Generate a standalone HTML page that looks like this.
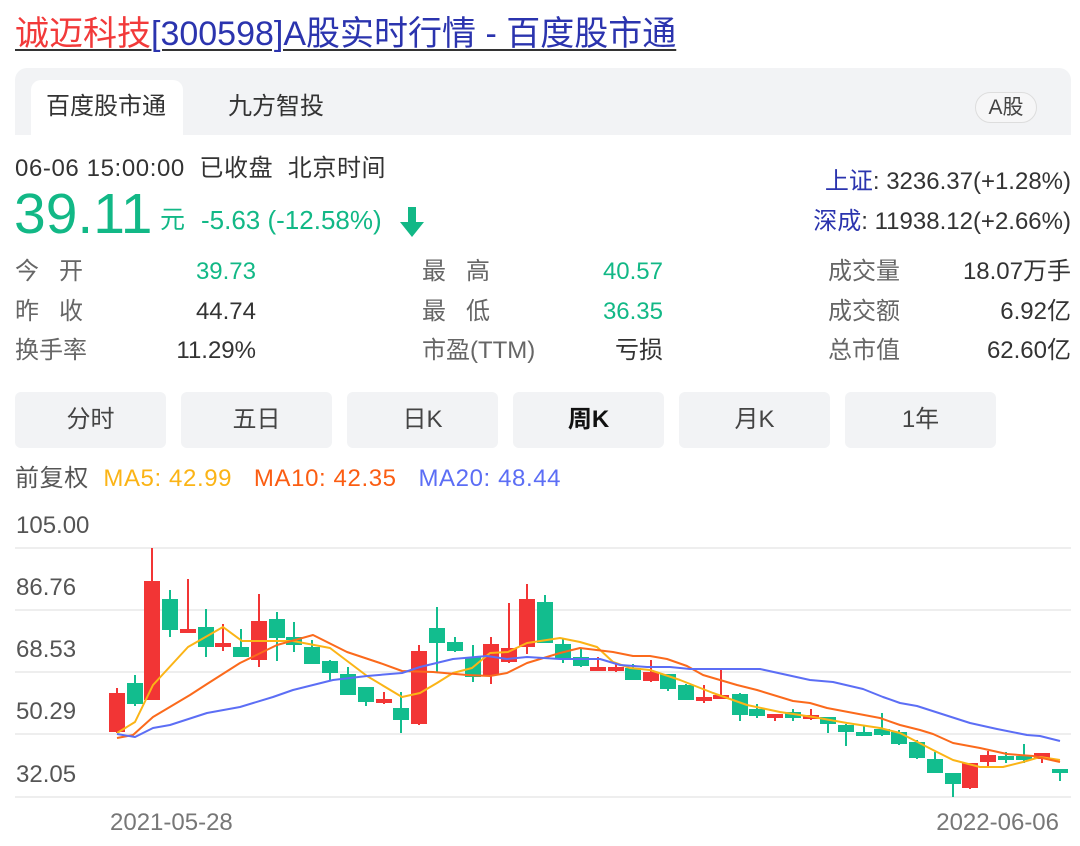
<!DOCTYPE html>
<html><head><meta charset="utf-8"><style>
*{margin:0;padding:0;box-sizing:border-box}
body{width:1080px;height:846px;background:#fff;font-family:"Liberation Sans","Noto Sans CJK SC",sans-serif;position:relative;overflow:hidden;color:#333}
.a{position:absolute;white-space:nowrap;line-height:1.15}
.t{font-size:34px;top:15px;left:15px;text-decoration:underline;text-decoration-thickness:2px;text-underline-offset:4px}
.bar{position:absolute;left:15px;top:68px;width:1056px;height:67px;background:#f2f3f5;border-radius:12px 12px 0 0}
.tab{position:absolute;left:31px;top:80px;width:152px;height:55px;background:#fff;border-radius:10px 10px 0 0}
.f22{font-size:24px}
.lb{color:#666}
.g{color:#12b886}
.btn{position:absolute;top:392px;width:151px;height:56px;background:#f2f3f5;border-radius:6px;font-size:24px;color:#444;text-align:center;line-height:56px}
.yl{font-size:24px;color:#555;left:16px}
</style></head><body>
<div class="a t"><span style="color:#f23a3a">诚迈科技</span><span style="color:#2b34ae">[300598]A股实时行情 - 百度股市通</span></div>
<div class="bar"></div><div class="tab"></div>
<div class="a f22" style="left:46px;top:93px;color:#333">百度股市通</div>
<div class="a f22" style="left:228px;top:93px;color:#333">九方智投</div>
<div class="a" style="left:975px;top:92px;width:62px;height:31px;border:1px solid #ddd;border-radius:16px;background:#f6f6f7;font-size:21px;text-align:center;line-height:29px;color:#444">A股</div>

<div class="a f22" style="left:15px;top:155px;color:#333;letter-spacing:0.6px">06-06 15:00:00&nbsp; 已收盘&nbsp; 北京时间</div>
<div class="a g" style="left:14px;top:184px;font-size:57px;line-height:60px">39.11</div>
<div class="a g" style="left:160px;top:206px;font-size:25px">元</div>
<div class="a g" style="left:201px;top:206px;font-size:26px">-5.63 (-12.58%)</div>
<svg class="a" style="left:398px;top:205px" width="30" height="34"><path d="M10 2h8v15h8L14 32 2 17h8z" fill="#12b886"/></svg>
<div class="a f22" style="right:9px;top:168px"><span style="color:#2b34ae">上证</span>: 3236.37(+1.28%)</div>
<div class="a f22" style="right:9px;top:208px"><span style="color:#2b34ae">深成</span>: 11938.12(+2.66%)</div>

<div class="a f22 lb" style="left:15px;top:258px">今&nbsp;&nbsp;&nbsp;开</div><div class="a f22 g" style="right:824px;top:258px">39.73</div>
<div class="a f22 lb" style="left:15px;top:298px">昨&nbsp;&nbsp;&nbsp;收</div><div class="a f22" style="right:824px;top:298px">44.74</div>
<div class="a f22 lb" style="left:15px;top:337px">换手率</div><div class="a f22" style="right:824px;top:337px">11.29%</div>
<div class="a f22 lb" style="left:422px;top:258px">最&nbsp;&nbsp;&nbsp;高</div><div class="a f22 g" style="right:417px;top:258px">40.57</div>
<div class="a f22 lb" style="left:422px;top:298px">最&nbsp;&nbsp;&nbsp;低</div><div class="a f22 g" style="right:417px;top:298px">36.35</div>
<div class="a f22 lb" style="left:422px;top:337px">市盈(TTM)</div><div class="a f22" style="right:417px;top:337px">亏损</div>
<div class="a f22 lb" style="left:828px;top:258px">成交量</div><div class="a f22" style="right:9px;top:258px">18.07万手</div>
<div class="a f22 lb" style="left:828px;top:298px">成交额</div><div class="a f22" style="right:9px;top:298px">6.92亿</div>
<div class="a f22 lb" style="left:828px;top:337px">总市值</div><div class="a f22" style="right:9px;top:337px">62.60亿</div>

<div class="btn" style="left:15px">分时</div>
<div class="btn" style="left:181px">五日</div>
<div class="btn" style="left:347px">日K</div>
<div class="btn" style="left:513px;color:#111;font-weight:bold">周K</div>
<div class="btn" style="left:679px">月K</div>
<div class="btn" style="left:845px">1年</div>

<div class="a" style="left:15px;top:465px;font-size:24px;letter-spacing:0.6px"><span style="color:#555">前复权</span>&nbsp;&nbsp;<span style="color:#fbb416">MA5: 42.99</span>&nbsp;&nbsp;&nbsp;<span style="color:#fb5d12">MA10: 42.35</span>&nbsp;&nbsp;&nbsp;<span style="color:#5c6ef5">MA20: 48.44</span></div>

<div class="a yl" style="top:512px">105.00</div>
<div class="a yl" style="top:574px">86.76</div>
<div class="a yl" style="top:636px">68.53</div>
<div class="a yl" style="top:698px">50.29</div>
<div class="a yl" style="top:761px">32.05</div>
<div class="a" style="left:110px;top:809px;font-size:24px;color:#777">2021-05-28</div>
<div class="a" style="right:21px;top:809px;font-size:24px;color:#777">2022-06-06</div>

<svg class="a" style="left:0;top:0" width="1080" height="846">
<g stroke="#eee" stroke-width="2">
<line x1="15" y1="548" x2="1071" y2="548"/><line x1="15" y1="610" x2="1071" y2="610"/><line x1="15" y1="672" x2="1071" y2="672"/><line x1="15" y1="734" x2="1071" y2="734"/><line x1="15" y1="797" x2="1071" y2="797"/>
</g>
<g stroke-width="2">
<g stroke="#f23535" fill="#f23535">
<line x1="117" y1="688" x2="117" y2="733"/><rect x="110" y="694" width="14" height="37"/>
<line x1="152" y1="548" x2="152" y2="700"/><rect x="145" y="582" width="14" height="117"/>
<line x1="188" y1="579" x2="188" y2="633"/><rect x="181" y="630" width="14" height="2"/>
<line x1="223" y1="624" x2="223" y2="651"/><rect x="216" y="644" width="14" height="2"/>
<line x1="259" y1="594" x2="259" y2="667"/><rect x="252" y="622" width="14" height="37"/>
<line x1="384" y1="692" x2="384" y2="704"/><rect x="377" y="700" width="14" height="2"/>
<line x1="419" y1="645" x2="419" y2="725"/><rect x="412" y="652" width="14" height="71"/>
<line x1="491" y1="637" x2="491" y2="684"/><rect x="484" y="645" width="14" height="29"/>
<line x1="509" y1="603" x2="509" y2="663"/><rect x="502" y="649" width="14" height="12"/>
<line x1="527" y1="584" x2="527" y2="654"/><rect x="520" y="600" width="14" height="46"/>
<line x1="598" y1="657" x2="598" y2="671"/><rect x="591" y="668" width="14" height="2"/>
<line x1="616" y1="664" x2="616" y2="672"/><rect x="609" y="668" width="14" height="2"/>
<line x1="651" y1="660" x2="651" y2="682"/><rect x="644" y="673" width="14" height="7"/>
<line x1="704" y1="685" x2="704" y2="703"/><rect x="697" y="698" width="14" height="2"/>
<line x1="721" y1="670" x2="721" y2="698"/><rect x="714" y="696" width="14" height="2"/>
<line x1="775" y1="714" x2="775" y2="721"/><rect x="768" y="715" width="14" height="2"/>
<line x1="811" y1="709" x2="811" y2="720"/><rect x="804" y="716" width="14" height="2"/>
<line x1="970" y1="764" x2="970" y2="789"/><rect x="963" y="764" width="14" height="23"/>
<line x1="988" y1="751" x2="988" y2="768"/><rect x="981" y="756" width="14" height="5"/>
<line x1="1042" y1="754" x2="1042" y2="763"/><rect x="1035" y="754" width="14" height="4"/>
</g>
<g stroke="#12bd8e" fill="#12bd8e">
<line x1="135" y1="675" x2="135" y2="706"/><rect x="128" y="684" width="14" height="19"/>
<line x1="170" y1="590" x2="170" y2="637"/><rect x="163" y="600" width="14" height="29"/>
<line x1="206" y1="609" x2="206" y2="657"/><rect x="199" y="628" width="14" height="18"/>
<line x1="241" y1="629" x2="241" y2="656"/><rect x="234" y="648" width="14" height="8"/>
<line x1="277" y1="612" x2="277" y2="661"/><rect x="270" y="620" width="14" height="17"/>
<line x1="294" y1="622" x2="294" y2="652"/><rect x="287" y="638" width="14" height="6"/>
<line x1="312" y1="640" x2="312" y2="663"/><rect x="305" y="648" width="14" height="15"/>
<line x1="330" y1="660" x2="330" y2="681"/><rect x="323" y="662" width="14" height="10"/>
<line x1="348" y1="667" x2="348" y2="695"/><rect x="341" y="675" width="14" height="19"/>
<line x1="366" y1="687" x2="366" y2="706"/><rect x="359" y="688" width="14" height="13"/>
<line x1="401" y1="692" x2="401" y2="733"/><rect x="394" y="709" width="14" height="10"/>
<line x1="437" y1="607" x2="437" y2="673"/><rect x="430" y="629" width="14" height="13"/>
<line x1="455" y1="637" x2="455" y2="652"/><rect x="448" y="643" width="14" height="7"/>
<line x1="473" y1="645" x2="473" y2="682"/><rect x="466" y="658" width="14" height="18"/>
<line x1="545" y1="595" x2="545" y2="642"/><rect x="538" y="603" width="14" height="39"/>
<line x1="563" y1="638" x2="563" y2="663"/><rect x="556" y="645" width="14" height="13"/>
<line x1="581" y1="649" x2="581" y2="667"/><rect x="574" y="658" width="14" height="7"/>
<line x1="633" y1="664" x2="633" y2="679"/><rect x="626" y="669" width="14" height="10"/>
<line x1="668" y1="674" x2="668" y2="691"/><rect x="661" y="675" width="14" height="13"/>
<line x1="686" y1="684" x2="686" y2="699"/><rect x="679" y="686" width="14" height="13"/>
<line x1="740" y1="693" x2="740" y2="721"/><rect x="733" y="695" width="14" height="19"/>
<line x1="757" y1="704" x2="757" y2="718"/><rect x="750" y="710" width="14" height="5"/>
<line x1="793" y1="709" x2="793" y2="721"/><rect x="786" y="713" width="14" height="4"/>
<line x1="828" y1="718" x2="828" y2="733"/><rect x="821" y="718" width="14" height="5"/>
<line x1="846" y1="724" x2="846" y2="746"/><rect x="839" y="726" width="14" height="5"/>
<line x1="864" y1="726" x2="864" y2="734"/><rect x="857" y="733" width="14" height="2"/>
<line x1="882" y1="713" x2="882" y2="736"/><rect x="875" y="730" width="14" height="4"/>
<line x1="899" y1="730" x2="899" y2="745"/><rect x="892" y="733" width="14" height="10"/>
<line x1="917" y1="740" x2="917" y2="759"/><rect x="910" y="743" width="14" height="14"/>
<line x1="935" y1="752" x2="935" y2="772"/><rect x="928" y="760" width="14" height="12"/>
<line x1="953" y1="774" x2="953" y2="797"/><rect x="946" y="774" width="14" height="9"/>
<line x1="1006" y1="752" x2="1006" y2="763"/><rect x="999" y="757" width="14" height="2"/>
<line x1="1024" y1="744" x2="1024" y2="763"/><rect x="1017" y="757" width="14" height="2"/>
<line x1="1060" y1="771" x2="1060" y2="781"/><rect x="1053" y="770" width="14" height="2"/>
</g>
</g>
<g fill="none" stroke-width="2" stroke-linejoin="round">
<polyline stroke="#fbb416" points="117,733 135,722 153,685 188,647 223,627 242,641 293,641 330,648 367,676 402,697 420,693 437,683 453,673 472,668 490,653 508,652 527,643 560,638 580,642 597,647 613,662 630,668 650,670 680,680 713,693 747,705 780,712 813,717 847,723 880,728 900,733 933,750 953,760 980,767 1003,767 1023,762 1040,757 1060,760"/>
<polyline stroke="#fb6a1c" points="117,738 133,735 153,717 190,695 207,684 240,663 277,645 313,635 347,652 380,663 402,671 433,672 467,675 490,676 507,673 527,663 560,653 580,648 613,652 633,656 650,656 667,659 687,666 703,675 737,685 757,690 793,701 810,703 827,708 880,718 900,725 920,730 933,734 953,743 980,748 1007,754 1033,756 1060,762"/>
<polyline stroke="#5c6ef5" points="117,734 135,737 153,728 170,725 207,713 240,707 273,697 293,690 333,680 367,676 402,673 420,667 453,659 487,656 507,659 527,657 560,659 600,659 620,665 647,667 670,667 690,669 760,669 810,680 833,682 863,689 883,697 900,703 917,706 970,723 997,729 1027,735 1040,736 1060,741"/>
</g>
</svg>
</body></html>
